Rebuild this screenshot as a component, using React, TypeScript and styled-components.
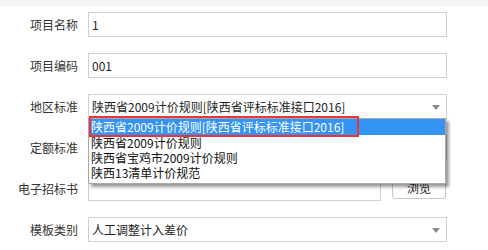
import styled, { createGlobalStyle } from 'styled-components';

const GlobalStyle = createGlobalStyle`
  html, body {
    margin: 0;
    padding: 0;
    background: #ffffff;
  }
  body {
    font-family: "Noto Sans CJK SC", "Noto Sans", sans-serif;
    font-size: 12px;
    color: #333333;
  }
`;

const regionOptions = [
  '陕西省2009计价规则[陕西省评标标准接口2016]',
  '陕西省2009计价规则',
  '陕西省宝鸡市2009计价规则',
  '陕西13清单计价规范',
];

const App = () => {
  return (
    <>
      <GlobalStyle />
      <Page>
        <TopStrip />
        <Form>
          <Row>
            <Label>项目名称</Label>
            <TextBox>1</TextBox>
          </Row>
          <Row>
            <Label>项目编码</Label>
            <TextBox>001</TextBox>
          </Row>
          <Row>
            <Label>地区标准</Label>
            <SelectWrap>
              <SelectBox>
                <span>{regionOptions[0]}</span>
                <Arrow />
              </SelectBox>
              <DropList>
                {regionOptions.map((opt, i) => (
                  <Option key={opt} $selected={i === 0}>
                    {opt}
                  </Option>
                ))}
              </DropList>
              <Highlight />
            </SelectWrap>
          </Row>
          <Row>
            <Label>定额标准</Label>
            <SelectBox>
              <span />
              <Arrow />
            </SelectBox>
          </Row>
          <Row>
            <Label>电子招标书</Label>
            <FileField>
              <TextBox />
              <BrowseButton>浏览</BrowseButton>
            </FileField>
          </Row>
          <Row>
            <Label>模板类别</Label>
            <SelectBox>
              <span>人工调整计入差价</span>
              <Arrow />
            </SelectBox>
          </Row>
        </Form>
      </Page>
    </>
  );
};

export default App;

const Page = styled.div`
  width: 488px;
  height: 250px;
  overflow: hidden;
  background: #ffffff;
`;

const TopStrip = styled.div`
  height: 6px;
  background: #f4f4f4;
`;

const Form = styled.div`
  display: flex;
  flex-direction: column;
  gap: 16px;
  padding-top: 6px;
`;

const Row = styled.div`
  display: grid;
  grid-template-columns: 78px 359px;
  column-gap: 10px;
  align-items: center;
  height: 25px;
`;

const Label = styled.div`
  text-align: right;
  font-size: 12px;
  color: #333333;
  white-space: nowrap;
`;

const TextBox = styled.div`
  box-sizing: border-box;
  height: 25px;
  border: 1px solid #cfcfcf;
  padding: 0 3px;
  display: flex;
  align-items: center;
  font-size: 12px;
  color: #222222;
  background: #ffffff;
  min-width: 0;
`;

const SelectWrap = styled.div`
  position: relative;
  height: 25px;
`;

const SelectBox = styled(TextBox)`
  justify-content: space-between;
  white-space: nowrap;
  padding-right: 6px;
`;

const Arrow = styled.span`
  width: 0;
  height: 0;
  border-left: 4px solid transparent;
  border-right: 4px solid transparent;
  border-top: 5px solid #8a8a8a;
  margin-top: 1px;
`;

const DropList = styled.div`
  position: absolute;
  top: 24px;
  left: 0;
  width: 358px;
  box-sizing: border-box;
  border: 1px solid #a8a8a8;
  background: #ffffff;
  padding-bottom: 3px;
  box-shadow: 3px 3px 3px rgba(0, 0, 0, 0.4);
  z-index: 2;
`;

const Option = styled.div<{ $selected: boolean }>`
  height: 15px;
  line-height: 15px;
  padding-left: 2px;
  font-size: 12px;
  white-space: nowrap;
  color: ${(p) => (p.$selected ? '#ffffff' : '#111111')};
  background: ${(p) => (p.$selected ? '#3394f5' : 'transparent')};
  ${(p) => p.$selected && 'height: 16px; line-height: 16px;'}
`;

const Highlight = styled.div`
  position: absolute;
  left: 1px;
  top: 22px;
  width: 270px;
  height: 21px;
  box-sizing: border-box;
  border: 2px solid #f0323a;
  z-index: 3;
`;

const FileField = styled.div`
  display: grid;
  grid-template-columns: 293px 54px;
  column-gap: 11px;
  align-items: start;
`;

const BrowseButton = styled.div`
  box-sizing: border-box;
  height: 23px;
  border: 1px solid #c8c8c8;
  border-radius: 3px;
  display: flex;
  align-items: center;
  justify-content: center;
  font-size: 12px;
  color: #222222;
  background: #ffffff;
`;
